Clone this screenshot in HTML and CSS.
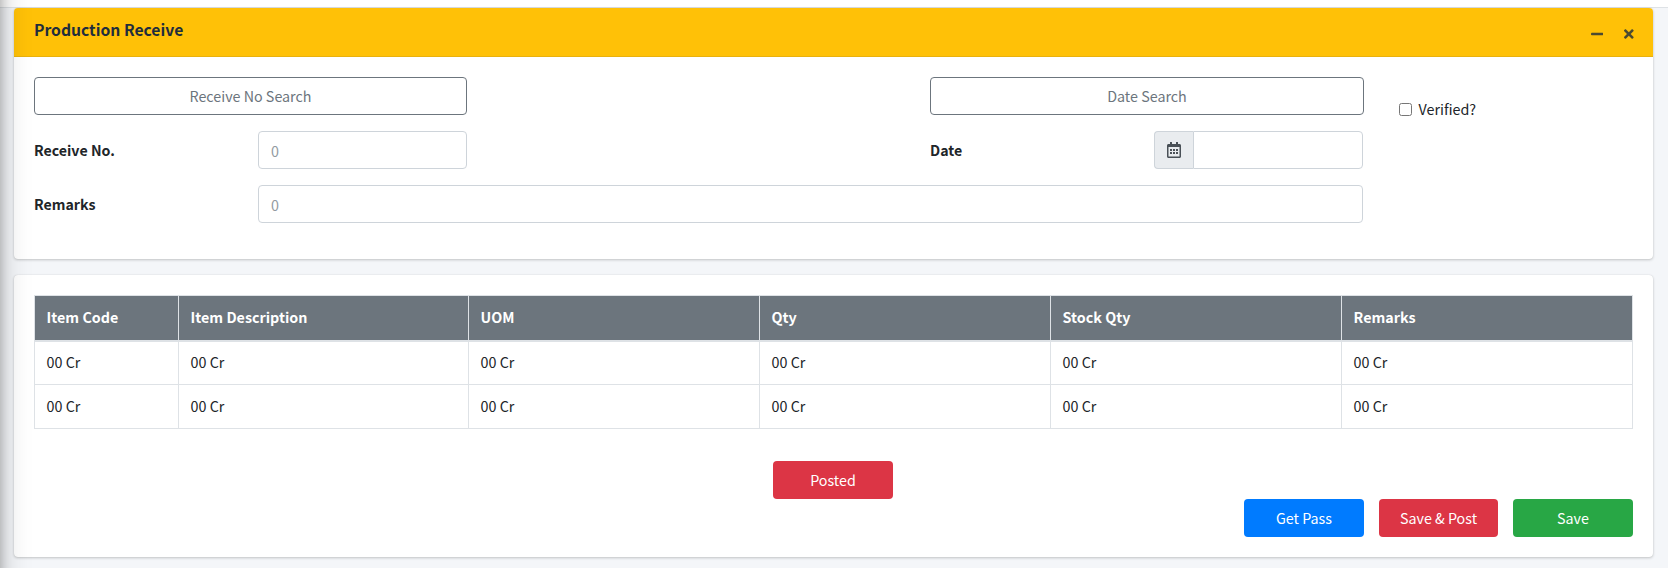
FILE: index.html
```html
<!DOCTYPE html>
<html lang="en">
<head>
<meta charset="utf-8">
<title>Production Receive</title>
<link rel="stylesheet" href="styles.css">
</head>
<body>
<aside class="sidebar"></aside>
<header class="navbar"></header>
<main class="content">
  <section class="card card-form">
    <div class="card-header">
      <h3 class="card-title">Production Receive</h3>
      <div class="card-tools">
        <svg class="tool-icon" viewBox="0 0 448 512"><path d="M416 208H32c-17.67 0-32 14.33-32 32v32c0 17.67 14.33 32 32 32h384c17.67 0 32-14.33 32-32v-32c0-17.67-14.33-32-32-32z"/></svg>
        <svg class="tool-icon" viewBox="0 0 352 512"><path d="M242.72 256l100.07-100.07c12.28-12.28 12.28-32.19 0-44.48l-22.24-22.24c-12.28-12.28-32.19-12.28-44.48 0L176 189.28 75.93 89.21c-12.28-12.28-32.19-12.28-44.48 0L9.21 111.45c-12.28 12.28-12.28 32.19 0 44.48L109.28 256 9.21 356.07c-12.28 12.28-12.28 32.19 0 44.48l22.24 22.24c12.28 12.28 32.2 12.28 44.48 0L176 322.72l100.07 100.07c12.28 12.28 32.2 12.28 44.48 0l22.24-22.24c12.28-12.28 12.28-32.19 0-44.48L242.72 256z"/></svg>
      </div>
    </div>
    <div class="card-body form-layout">
      <div class="form-grid">
        <button class="btn btn-outline receive-search">Receive No Search</button>
        <button class="btn btn-outline date-search">Date Search</button>
        <label class="label receive-label" for="receive">Receive No.</label>
        <input class="input receive-input" id="receive" placeholder="0">
        <label class="label date-label" for="date">Date</label>
        <div class="input-group">
          <span class="addon"><svg class="calendar" viewBox="0 0 448 512"><path d="M148 288h-40c-6.600 0-12-5.400-12-12v-40c0-6.600 5.400-12 12-12h40c6.600 0 12 5.400 12 12v40c0 6.600-5.400 12-12 12zm108-12v-40c0-6.600-5.400-12-12-12h-40c-6.600 0-12 5.400-12 12v40c0 6.600 5.400 12 12 12h40c6.600 0 12-5.400 12-12zm96 0v-40c0-6.600-5.400-12-12-12h-40c-6.600 0-12 5.400-12 12v40c0 6.600 5.400 12 12 12h40c6.600 0 12-5.400 12-12zm-96 96v-40c0-6.600-5.400-12-12-12h-40c-6.600 0-12 5.400-12 12v40c0 6.600 5.400 12 12 12h40c6.600 0 12-5.400 12-12zm-96 0v-40c0-6.600-5.400-12-12-12h-40c-6.600 0-12 5.400-12 12v40c0 6.600 5.400 12 12 12h40c6.600 0 12-5.400 12-12zm192 0v-40c0-6.600-5.400-12-12-12h-40c-6.600 0-12 5.400-12 12v40c0 6.600 5.400 12 12 12h40c6.600 0 12-5.400 12-12zm96-260v352c0 26.500-21.500 48-48 48H48c-26.500 0-48-21.500-48-48V112c0-26.500 21.500-48 48-48h48V12c0-6.600 5.400-12 12-12h40c6.600 0 12 5.400 12 12v52h128V12c0-6.600 5.400-12 12-12h40c6.600 0 12 5.400 12 12v52h48c26.500 0 48 21.500 48 48zm-48 346V160H48v298c0 3.300 2.700 6 6 6h340c3.300 0 6-2.700 6-6z"/></svg></span>
          <input class="input date-input" id="date">
        </div>
        <label class="label remarks-label" for="remarks">Remarks</label>
        <input class="input remarks-input" id="remarks" placeholder="0">
      </div>
      <label class="verified"><input class="checkbox" type="checkbox"><span>Verified?</span></label>
    </div>
  </section>

  <section class="card card-items">
    <table class="table">
      <colgroup><col class="col-code"><col class="col-desc"><col><col><col><col></colgroup>
      <thead>
        <tr><th>Item Code</th><th>Item Description</th><th>UOM</th><th>Qty</th><th>Stock Qty</th><th>Remarks</th></tr>
      </thead>
      <tbody>
        <tr><td>00 Cr</td><td>00 Cr</td><td>00 Cr</td><td>00 Cr</td><td>00 Cr</td><td>00 Cr</td></tr>
        <tr><td>00 Cr</td><td>00 Cr</td><td>00 Cr</td><td>00 Cr</td><td>00 Cr</td><td>00 Cr</td></tr>
      </tbody>
    </table>
    <div class="status-row"><button class="btn btn-action btn-danger">Posted</button></div>
    <div class="actions">
      <button class="btn btn-action btn-primary">Get Pass</button>
      <button class="btn btn-action btn-danger btn-post">Save &amp; Post</button>
      <button class="btn btn-action btn-success">Save</button>
    </div>
  </section>
</main>
</body>
</html>
```
FILE: styles.css
```css
* { box-sizing: border-box; }
html, body { height: 100%; }
body {
  margin: 0;
  overflow: hidden;
  background: #f4f6f9;
  color: #212529;
  font-family: "Noto Sans CJK SC", "Noto Sans", sans-serif;
  font-size: 14.3px;
  line-height: 24px;
}
button, input { font: inherit; }

.sidebar {
  position: absolute;
  top: -60px;
  left: -250px;
  width: 250px;
  height: 700px;
  z-index: 10;
  box-shadow: 0 14px 28px rgba(0, 0, 0, .25), 0 10px 10px rgba(0, 0, 0, .22);
}
.navbar { height: 8px; background: #fff; border-bottom: 1px solid #dee2e6; }
.content { padding: 0 15px 0 14px; display: flex; flex-direction: column; gap: 16px; }

.card {
  background: #fff;
  border-radius: 4px;
  box-shadow: 0 0 1px rgba(0, 0, 0, .125), 0 1px 3px rgba(0, 0, 0, .2);
}
.card-form { height: 251px; }
.card-items { height: 282px; padding: 20px; }
.card-header {
  height: 49px;
  padding: 10px 19px 0 20px;
  display: flex;
  justify-content: space-between;
  background: #ffc107;
  border-bottom: 1px solid #e9b10d;
  border-radius: 4px 4px 0 0;
}
.card-title { margin: 0; font-size: 15.7px; font-weight: 700; line-height: 24px; color: #1f2d3d; }
.card-tools { display: flex; gap: 21px; height: 32px; align-items: center; }
.tool-icon { height: 14px; fill: #1f2d3d; opacity: .8; }

.card-body { padding: 20px; }
.form-layout { display: flex; align-items: flex-start; }
.form-grid {
  width: 1330px;
  display: grid;
  grid-template-columns: 224px 209px 463px 224px 210px;
  grid-template-rows: 38px 38px 38px;
  row-gap: 16px;
}
.receive-search { grid-column: 1 / 3; }
.date-search { grid-column: 4 / 6; }
.date-label { grid-column: 4; }
.remarks-input { grid-column: 2 / 6; margin-right: 1px; }
.label { font-size: 14.2px; font-weight: 700; line-height: 38px; }

.btn {
  height: 38px;
  padding: 0 12px;
  border: 1px solid transparent;
  border-radius: 4px;
  line-height: 24px;
  text-align: center;
}
.btn-outline { background: #fff; border-color: #6c757d; color: #6c757d; }
.input {
  min-width: 0;
  height: 38px;
  padding: 6px 12px;
  border: 1px solid #ced4da;
  border-radius: 4px;
  background: #fff;
  color: #495057;
}
.input::placeholder { color: #939ba2; opacity: 1; }
.input-group { display: flex; margin-right: 1px; }
.addon {
  width: 39px;
  display: flex;
  align-items: center;
  justify-content: center;
  background: #e9ecef;
  border: 1px solid #ced4da;
  border-right: 0;
  border-radius: 4px 0 0 4px;
}
.calendar { height: 16px; fill: #495057; }
.date-input { flex: 1; border-radius: 0 4px 4px 0; }
.verified { display: flex; align-items: center; gap: 6.5px; margin: 20px 0 0 35px; }
.checkbox { width: 13px; height: 13px; margin: 0; }

.table { width: 1599px; table-layout: fixed; border-collapse: collapse; }
.col-code { width: 144px; }
.col-desc { width: 290px; }
.table th, .table td {
  height: 44px;
  padding: 0 11.6px 2px;
  border: 1px solid #dee2e6;
  text-align: left;
}
.table th { height: 45px; background: #6c757d; color: #fff; border-bottom-width: 2px; }
.status-row { display: flex; justify-content: center; margin: 32px 1px 0 0; }
.actions { display: flex; justify-content: flex-end; gap: 15px; }
.btn-action { width: 120px; color: #fff; }
.btn-post { width: 119px; }
.btn-primary { background: #007bff; }
.btn-danger { background: #dc3545; }
.btn-success { background: #28a745; }
```
